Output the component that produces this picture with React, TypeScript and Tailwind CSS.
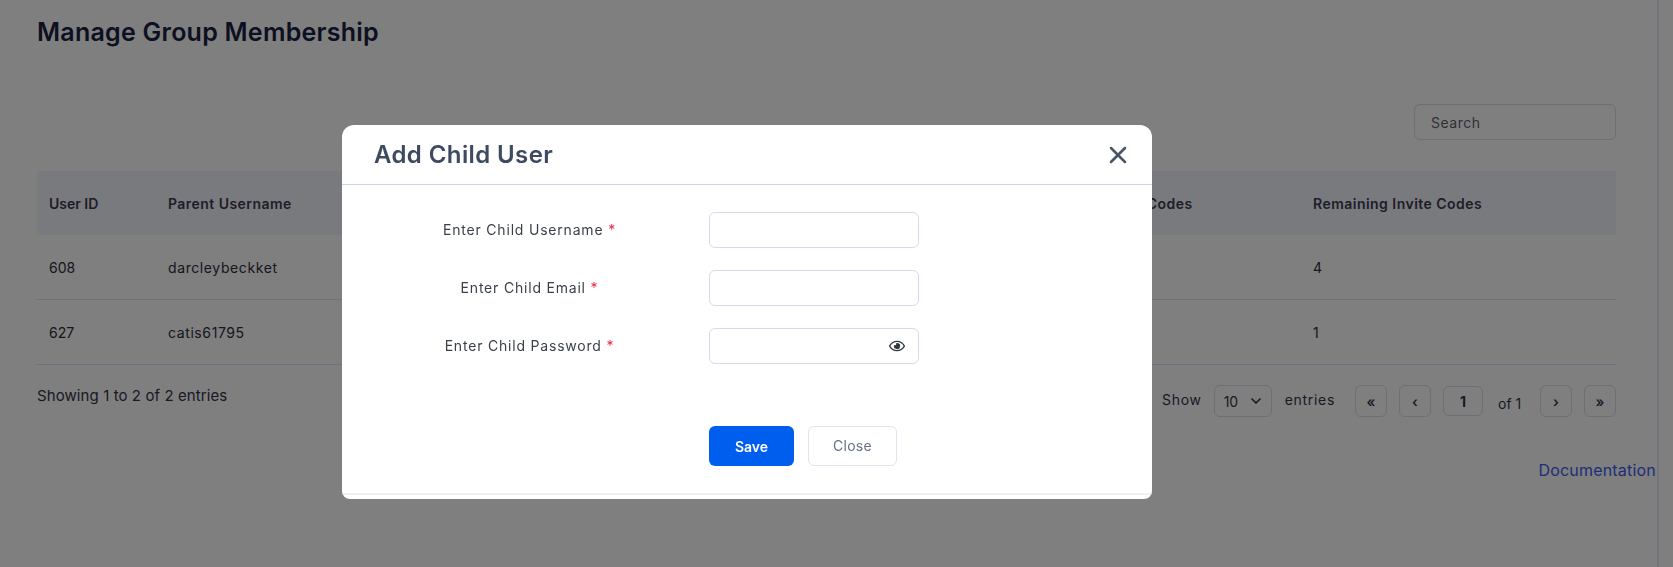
import { ChevronDown, X } from "lucide-react";
import { FaRegEye } from "react-icons/fa";

const rows = [
  { id: "608", parent: "darcleybeckket", codes: "1", remaining: "4" },
  { id: "627", parent: "catis61795", codes: "4", remaining: "1" },
];

const fields = ["Enter Child Username", "Enter Child Email", "Enter Child Password"];

const PageButton = ({ label }: { label: string }) => (
  <button className="w-8 h-8 rounded-md border border-[#dcdcec] flex items-center justify-center text-[14px] font-semibold text-[#3a3a4c]">
    {label}
  </button>
);

const App = () => {
  return (
    <div className="h-[567px] overflow-hidden bg-white font-['Inter',sans-serif]">
      <div className="w-[1659px] h-full border-r-2 border-[#e9ebf8] pl-[37px] pr-[1px]">
        <div className="w-[1579px]">
          <h1 className="pt-[14px] h-[50px] text-[25px] leading-[36px] font-semibold text-[#1a2142] tracking-[0.25px]">
            Manage Group Membership
          </h1>

          <div className="mt-[54px] flex justify-end">
            <input
              placeholder="Search"
              className="w-[202px] h-9 rounded-md border border-[#dcdcec] px-4 text-[14px] tracking-[0.5px] placeholder:text-[#62626e]"
            />
          </div>

          <div className="mt-[31px]">
            <div className="grid grid-cols-[131px_1fr_210px_315px] h-16 items-center bg-[#f2f5fd] text-[14px] font-semibold text-[#3c3c50]">
              <span className="pl-3">User ID</span>
              <span className="tracking-[0.45px]">Parent Username</span>
              <span className="pl-3 tracking-[0.45px]">Invite Codes</span>
              <span className="pl-3 tracking-[0.47px]">Remaining Invite Codes</span>
            </div>
            {rows.map((row) => (
              <div
                key={row.id}
                className="grid grid-cols-[131px_1fr_210px_315px] h-[65px] items-center border-b border-[#dde0fb] text-[14px] text-[#2c2c3c]"
              >
                <span className="pl-3">{row.id}</span>
                <span className="tracking-[0.6px]">{row.parent}</span>
                <span className="pl-3">{row.codes}</span>
                <span className="pl-3">{row.remaining}</span>
              </div>
            ))}
          </div>

          <div className="mt-5 flex justify-between items-center text-[14px] text-[#33334a]">
            <span className="-mt-[9px] text-[15px] tracking-[0.09px]">Showing 1 to 2 of 2 entries</span>
            <div className="flex items-center">
              <span className="mr-3 -mt-[4px] tracking-[0.7px]">Show</span>
              <div className="w-[58px] h-8 rounded-md border border-[#dcdcec] flex items-center justify-between pl-[9px] pr-[7px]">
                <span>10</span>
                <ChevronDown size={16} strokeWidth={2.5} />
              </div>
              <span className="ml-[13px] mr-5 -mt-[4px] tracking-[0.7px]">entries</span>
              <div className="flex items-center gap-3">
                <PageButton label="«" />
                <PageButton label="‹" />
              </div>
              <span className="ml-3 w-10 h-[30px] rounded-md border border-[#dcdcec] flex items-center justify-center font-bold">
                1
              </span>
              <span className="ml-[15px] mr-5 mt-[4px] w-[22px] whitespace-nowrap">of 1</span>
              <div className="flex items-center gap-3">
                <PageButton label="›" />
                <PageButton label="»" />
              </div>
            </div>
          </div>

          <div className="mt-[43px] flex justify-end">
            <a className="-mr-[40px] text-[16px] leading-[21px] tracking-[0.2px] text-[#3a5cf0]">Documentation</a>
          </div>
        </div>
      </div>

      {/* modal backdrop */}
      <div className="fixed inset-0 bg-black/50 pt-[125px] pl-[342px]">
        <div className="w-[810px] h-[374px] rounded-t-xl rounded-b-lg bg-white overflow-hidden">
          <div className="h-[60px] border-b border-[#cbd2e2] pl-[32px] pr-[20px] flex items-center justify-between">
            <h2 className="text-[24px] font-semibold text-[#3d4a5f] tracking-[0.4px]">Add Child User</h2>
            <X size={28} strokeWidth={2.2} className="text-[#4b5568]" />
          </div>

          <div className="pt-[27px] pl-[8px] flex flex-col gap-[22px]">
            {fields.map((label, i) => (
              <div key={label} className="flex items-center">
                <label className="w-[359px] pb-[2px] text-center text-[14px] text-[#3a3f4c] tracking-[0.8px]">
                  {label} <span className="text-[#f0243c]">*</span>
                </label>
                <div className="relative">
                  <input className="block w-[210px] h-9 rounded-md border border-[#d6daea]" />
                  {i === 2 && (
                    <FaRegEye size={16} className="absolute right-[14px] top-[10px] text-[#333841]" />
                  )}
                </div>
              </div>
            ))}
          </div>

          <div className="mt-[62px] pl-[367px] flex gap-[14px]">
            <button className="w-[85px] h-10 rounded-md bg-[#005eef] text-[14px] font-semibold text-white">
              Save
            </button>
            <button className="w-[89px] h-10 rounded-md border border-[#e0e4ee] pb-[2px] text-[14px] tracking-[0.3px] text-[#667085]">
              Close
            </button>
          </div>

          <div className="mt-[27px] border-t-2 border-[#eef0f4]" />
        </div>
      </div>
    </div>
  );
};

export default App;
